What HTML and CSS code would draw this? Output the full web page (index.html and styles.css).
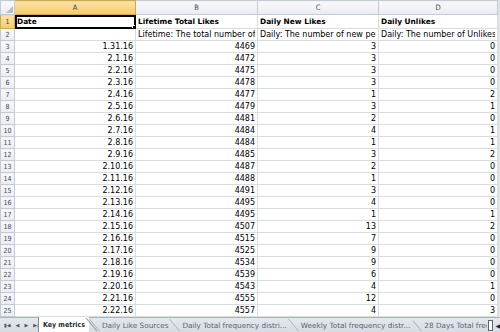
FILE: index.html
```html
<!DOCTYPE html>
<html lang="en">
<head>
    <meta charset="UTF-8">
    <title>Key metrics</title>
    <link rel="stylesheet" href="styles.css">
</head>
<body>
    <div class="workbook">
        <div class="grid-area">
            <table class="sheet">
                <colgroup>
                    <col class="col-head">
                    <col class="col-a">
                    <col class="col-b">
                    <col class="col-c">
                    <col class="col-d">
                </colgroup>
                <thead>
                    <tr class="letters">
                        <th class="corner"><span class="tri"></span></th>
                        <th class="active">A</th>
                        <th>B</th>
                        <th>C</th>
                        <th>D</th>
                    </tr>
                </thead>
                <tbody id="rows">
                    <tr class="row-title">
                        <th class="active">1</th>
                        <td class="txt bold selected">Date<span class="handle"></span></td>
                        <td class="txt bold">Lifetime Total Likes</td>
                        <td class="txt bold">Daily New Likes</td>
                        <td class="txt bold">Daily Unlikes</td>
                    </tr>
                    <tr>
                        <th>2</th>
                        <td class="txt"></td>
                        <td class="txt"><div class="clip">Lifetime: The total number of people who have liked your Page.</div></td>
                        <td class="txt"><div class="clip">Daily: The number of new people who have liked your Page.</div></td>
                        <td class="txt"><div class="clip">Daily: The number of Unlikes of your Page.</div></td>
                    </tr>
                </tbody>
            </table>
            <div class="vscroll"></div>
        </div>
        <div class="tabbar">
            <div class="nav">
                <span>&#9646;&#9664;</span><span>&#9664;</span><span>&#9654;</span><span>&#9654;&#9646;</span>
            </div>
            <div class="tab current">Key metrics</div>
            <div class="tab">Daily Like Sources</div>
            <div class="tab">Daily Total frequency distri...</div>
            <div class="tab">Weekly Total frequency distr...</div>
            <div class="tab last">28 Days Total frequency distr...</div>
            <div class="split"></div>
            <div class="hleft">&#9664;</div>
        </div>
    </div>

    <script>
        // date, lifetime likes, new likes, unlikes
        const data = [
            ['1.31.16', 4469, 3, 0],
            ['2.1.16', 4472, 3, 0],
            ['2.2.16', 4475, 3, 0],
            ['2.3.16', 4478, 3, 0],
            ['2.4.16', 4477, 1, 2],
            ['2.5.16', 4479, 3, 1],
            ['2.6.16', 4481, 2, 0],
            ['2.7.16', 4484, 4, 1],
            ['2.8.16', 4484, 1, 1],
            ['2.9.16', 4485, 3, 2],
            ['2.10.16', 4487, 2, 0],
            ['2.11.16', 4488, 1, 0],
            ['2.12.16', 4491, 3, 0],
            ['2.13.16', 4495, 4, 0],
            ['2.14.16', 4495, 1, 1],
            ['2.15.16', 4507, 13, 2],
            ['2.16.16', 4515, 7, 0],
            ['2.17.16', 4525, 9, 0],
            ['2.18.16', 4534, 9, 0],
            ['2.19.16', 4539, 6, 0],
            ['2.20.16', 4543, 4, 1],
            ['2.21.16', 4555, 12, 0],
            ['2.22.16', 4557, 4, 3]
        ];
        const body = document.getElementById('rows');
        data.forEach(function(row, i) {
            const tr = document.createElement('tr');
            let html = '<th>' + (i + 3) + '</th>';
            row.forEach(function(v) {
                html += '<td class="num">' + v + '</td>';
            });
            tr.innerHTML = html;
            body.appendChild(tr);
        });
    </script>
</body>
</html>
```

FILE: styles.css
```css
body {
    margin: 0;
    font-family: "DejaVu Sans", Verdana, sans-serif;
    background: #fff;
}
.workbook {
    width: 500px;
    height: 332px;
    display: flex;
    flex-direction: column;
    overflow: hidden;
}
.grid-area {
    height: 318px;
    display: flex;
    overflow: hidden;
}
.sheet {
    table-layout: fixed;
    border-collapse: collapse;
    width: 497px;
    flex: none;
    font-size: 8px;
    color: #000;
}
.col-head { width: 14px; }
.col-a { width: 121px; }
.col-b { width: 122px; }
.col-c { width: 121px; }
.col-d { width: 119px; }
.sheet th {
    background: linear-gradient(#f7f8fa, #e9edf2);
    border: 1px solid #c5cbd3;
    color: #3b4a5c;
    font-family: "DejaVu Sans Condensed", "DejaVu Sans", sans-serif;
    font-weight: normal;
    font-size: 7px;
    padding: 0;
    overflow: hidden;
}
.letters th {
    height: 13px;
    text-align: center;
    font-size: 7.5px;
}
.sheet th.active {
    background: linear-gradient(#fbe4a6, #f5c96a);
    border-color: #c9a95a;
    color: #2d3a4a;
}
.corner {
    position: relative;
}
.tri {
    position: absolute;
    right: 1px;
    bottom: 1px;
    width: 0;
    height: 0;
    border-left: 7px solid transparent;
    border-bottom: 7px solid #b7bec7;
}
tbody th {
    text-align: center;
    height: 11px;
}
.row-title th,
.row-title td {
    height: 13px;
}
.sheet td {
    border: 1px solid #dadcdd;
    padding: 0 2px;
    white-space: nowrap;
    overflow: hidden;
    line-height: 11px;
}
.clip {
    overflow: hidden;
    white-space: nowrap;
}
.txt {
    text-align: left;
}
.bold {
    font-weight: bold;
    font-size: 7.4px;
}
.num {
    text-align: right;
}
.selected {
    position: relative;
    outline: 2px solid #000;
    outline-offset: -2px;
    overflow: visible;
}
.handle {
    position: absolute;
    right: -3px;
    bottom: -3px;
    width: 4px;
    height: 4px;
    background: #000;
    border: 1px solid #fff;
}
.vscroll {
    flex: none;
    width: 3px;
    background: #dfe3e8;
}
.tabbar {
    height: 14px;
    display: flex;
    align-items: stretch;
    background: linear-gradient(#e4e8ed, #d7dce3);
    border-top: 1px solid #aab3be;
    font-size: 7.3px;
    color: #5b6470;
    white-space: nowrap;
}
.nav {
    flex: none;
    display: flex;
    gap: 5px;
    align-items: center;
    padding: 0 4px;
    font-size: 5px;
    color: #4f5966;
    width: 30px;
}
.tab {
    flex: none;
    position: relative;
    display: flex;
    align-items: center;
    padding: 0 3px 0 11px;
}
.tab::before {
    content: "";
    position: absolute;
    left: 3px;
    top: 1px;
    bottom: 1px;
    width: 1px;
    background: #a6afba;
    transform: skewX(40deg);
}
.tab.current {
    background: #fff;
    color: #1f2a36;
    font-family: "DejaVu Sans Condensed", "DejaVu Sans", sans-serif;
    font-weight: bold;
    font-size: 7px;
    margin-top: -1px;
    padding: 0 4px 0 4px;
    border-left: 1px solid #7f8a96;
    margin-right: 2px;
}
.tab.current::before {
    left: auto;
    right: -3px;
    background: #7f8a96;
}
.tab.last {
    flex: 1;
    min-width: 0;
    overflow: hidden;
    padding-right: 0;
}
.split {
    flex: none;
    width: 3px;
    height: 9px;
    margin: 2px 2px 0 1px;
    border: 1px solid #5b6470;
    background: #fff;
}
.hleft {
    flex: none;
    display: flex;
    align-items: center;
    font-size: 6px;
    color: #1f2a36;
}
```
